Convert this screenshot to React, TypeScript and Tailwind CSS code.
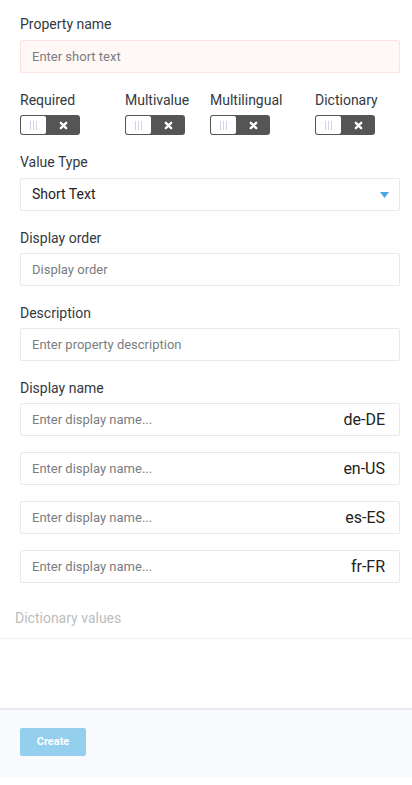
const font = { fontFamily: "Roboto, 'Liberation Sans', sans-serif" };

const Toggle = () => (
  <div className="flex h-5 w-[60px] overflow-hidden rounded-[3px] bg-[#555555]">
    <div className="m-[1px] flex w-[25px] items-center justify-center rounded-[2px] bg-white">
      <span className="flex gap-[2px]">
        <span className="h-[9px] w-px bg-[#cfd6e6]" />
        <span className="h-[9px] w-px bg-[#cfd6e6]" />
        <span className="h-[9px] w-px bg-[#cfd6e6]" />
      </span>
    </div>
    <div className="flex flex-1 items-center justify-center">
      <svg width="9" height="9" viewBox="0 0 10 10">
        <path d="M2 2 L8 8 M8 2 L2 8" stroke="white" strokeWidth="2.6" strokeLinecap="round" />
      </svg>
    </div>
  </div>
);

const Label = ({ children }: { children: React.ReactNode }) => (
  <div className="text-[14px] leading-4 text-[#333a42]">{children}</div>
);

const Input = ({ placeholder, pink }: { placeholder: string; pink?: boolean }) => (
  <div
    className={`flex h-[33px] items-center rounded-[2px] border px-[11px] text-[13px] text-[#7a7d82] ${
      pink ? "border-[#fbe3df] bg-[#fff8f6]" : "border-[#e8e9f0] bg-white"
    }`}
  >
    {placeholder}
  </div>
);

const App = () => {
  const flags = [
    { label: "Required", w: "w-[105px]" },
    { label: "Multivalue", w: "w-[85px]" },
    { label: "Multilingual", w: "w-[105px]" },
    { label: "Dictionary", w: "w-[80px]" },
  ];
  const langs = ["de-DE", "en-US", "es-ES", "fr-FR"];

  return (
    <div className="min-h-[785px] w-[412px] bg-white" style={font}>
      <div className="flex flex-col pl-5 pr-3 pt-4">
        <Label>Property name</Label>
        <div className="mt-[8px]">
          <Input placeholder="Enter short text" pink />
        </div>

        <div className="mt-[19px] flex">
          {flags.map((f) => (
            <div key={f.label} className={`flex flex-col gap-[7px] ${f.w}`}>
              <Label>{f.label}</Label>
              <Toggle />
            </div>
          ))}
        </div>

        <div className="mt-[19px]">
          <Label>Value Type</Label>
        </div>
        <div className="mt-[8px] flex h-[33px] items-center justify-between rounded-[2px] border border-[#e8e9f0] bg-white pl-[11px] pr-[10px] text-[14px] text-[#222]">
          <span>Short Text</span>
          <svg width="9" height="6" viewBox="0 0 9 6">
            <path d="M0 0 H9 L4.5 6 Z" fill="#4aa8e0" />
          </svg>
        </div>

        <div className="mt-[19px]">
          <Label>Display order</Label>
        </div>
        <div className="mt-[7px]">
          <Input placeholder="Display order" />
        </div>

        <div className="mt-[19px]">
          <Label>Description</Label>
        </div>
        <div className="mt-[7px]">
          <Input placeholder="Enter property description" />
        </div>

        <div className="mt-[19px]">
          <Label>Display name</Label>
        </div>
        <div className="mt-[7px] flex flex-col gap-[16px]">
          {langs.map((l) => (
            <div
              key={l}
              className="flex h-[33px] items-center justify-between rounded-[2px] border border-[#e8e9f0] bg-white pl-[11px] pr-[14px]"
            >
              <span className="text-[13px] text-[#7a7d82]">Enter display name...</span>
              <span className="text-[16px] text-[#222]">{l}</span>
            </div>
          ))}
        </div>
      </div>

      <div className="mt-[27px] border-b border-[#eef0f5] px-[15px] pb-[12px] text-[14px] leading-4 text-[#bdbdbd]">
        Dictionary values
      </div>
      <div className="h-[69px]" />

      <div className="h-[69px] border-t-2 border-[#e9ebf1] bg-[#f9fafd] px-5 pt-[18px]">
        <button className="flex h-[28px] w-[66px] items-center justify-center rounded-[2px] bg-[#94cfee] text-[11px] font-bold text-white">
          Create
        </button>
      </div>
    </div>
  );
};

export default App;
